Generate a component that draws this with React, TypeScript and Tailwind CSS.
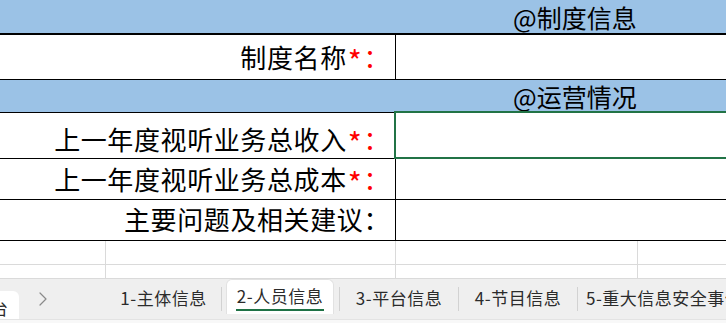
const cjk = "font-['Noto_Sans_CJK_SC','Noto_Sans',sans-serif]"

function ChevronRightIcon({ className }: { className?: string }) {
  return (
    <svg className={className} width="8" height="14" viewBox="0 0 8 14" fill="none">
      <path d="M1 1l6 6-6 6" stroke="currentColor" strokeWidth="1.2" strokeLinecap="round" strokeLinejoin="round" />
    </svg>
  )
}

interface RowProps {
  label: string
  required?: boolean
  height: string
  pad: string
  selected?: boolean
}

function LabelRow({ label, required, height, pad, selected }: RowProps) {
  return (
    <div className={`flex w-full border-b border-black ${height}`}>
      <div className={`w-[396px] shrink-0 border-r border-black flex items-end justify-end pr-[5px] ${pad}`}>
        <span className={`${cjk} text-[26px] tracking-[0.6px] leading-none text-black whitespace-nowrap`}>
          {label}
          {required ? (
            <span className="text-[#ff0000]">
              <span className="inline-block translate-y-[5px] text-[30px] px-[1px]">*</span>：
            </span>
          ) : (
            "："
          )}
        </span>
      </div>
      <div className="relative flex-1">
        {selected && <div className="absolute -top-[2px] -left-[2px] -right-[4px] -bottom-[1px] border-2 border-[#217346]" />}
      </div>
    </div>
  )
}

function BlueRow({ title, height }: { title: string; height: string }) {
  return (
    <div className={`flex items-center w-full bg-[#9bc2e6] border-b border-black pl-[513px] ${height}`}>
      <span className={`${cjk} text-[25px] leading-[30px] text-black whitespace-nowrap`}>{title}</span>
    </div>
  )
}

function GridRow({ height }: { height: string }) {
  return (
    <div className={`flex w-full border-b border-[#dadada] ${height}`}>
      <div className="w-[106px] shrink-0 border-r border-[#dadada]" />
      <div className="w-[290px] shrink-0 border-r border-[#dadada]" />
      <div className="w-[242px] shrink-0 border-r border-[#dadada]" />
      <div className="flex-1" />
    </div>
  )
}

const tabs = ["1-主体信息", "2-人员信息", "3-平台信息", "4-节目信息", "5-重大信息安全事件"]

export default function App() {
  return (
    <div className="w-[726px] h-[323px] overflow-hidden bg-white flex flex-col">
      {/* sheet */}
      <div className="flex flex-col">
        <div className="border-b border-black">
          <BlueRow title="@制度信息" height="h-[34px]" />
        </div>
        <LabelRow label="制度名称" required height="h-[45px]" pad="pb-[9px]" />
        <BlueRow title="@运营情况" height="h-[33px]" />
        <LabelRow label="上一年度视听业务总收入" required height="h-[46px]" pad="pb-[6px]" selected />
        <LabelRow label="上一年度视听业务总成本" required height="h-[41px]" pad="pb-[7px]" />
        <LabelRow label="主要问题及相关建议" height="h-[41px]" pad="pb-[8px]" />
        <GridRow height="h-[24px]" />
        <GridRow height="h-[14px]" />
      </div>

      {/* sheet tabs */}
      <div className={`${cjk} flex flex-col flex-1`}>
        <div className="flex items-stretch h-[40px] bg-[#efefef] text-[17px] tracking-[0.5px] text-[#2b2b2b]">
          <div className="w-[19px] shrink-0 mt-[12px] bg-white rounded-tr-md overflow-hidden flex items-end">
            <span className="-ml-[9px] mb-[3px] leading-none">台</span>
          </div>
          <div className="w-[87px] shrink-0 flex items-start pt-[13px] pl-[20px] text-[#8a8a8a]">
            <ChevronRightIcon />
          </div>
          <div className="w-[115px] shrink-0 flex items-center justify-center pb-[3px]">{tabs[0]}</div>
          <div className="w-px shrink-0 my-[8px] bg-[#d2d2d2]" />
          <div className="ml-[4px] w-[108px] shrink-0 mb-[5px] bg-white rounded-t-md border border-b-0 border-[#e2e2e2] flex flex-col items-center justify-center">
            <span className="mt-[1px] leading-[22px]">{tabs[1]}</span>
            <span className="w-[88px] h-[2px] bg-[#1e7145] mt-[2px]" />
          </div>
          <div className="ml-[5px] w-px shrink-0 my-[8px] bg-[#d2d2d2]" />
          <div className="w-[118px] shrink-0 flex items-center justify-center pb-[3px]">{tabs[2]}</div>
          <div className="w-px shrink-0 my-[8px] bg-[#d2d2d2]" />
          <div className="w-[118px] shrink-0 flex items-center justify-center pb-[3px]">{tabs[3]}</div>
          <div className="w-px shrink-0 my-[8px] bg-[#d2d2d2]" />
          <div className="shrink-0 flex items-center pl-[8px] pb-[3px] whitespace-nowrap">{tabs[4]}</div>
        </div>
        <div className="flex-1 bg-[#f8f8f8] border-t border-[#e3e3e3]" />
      </div>
    </div>
  )
}
